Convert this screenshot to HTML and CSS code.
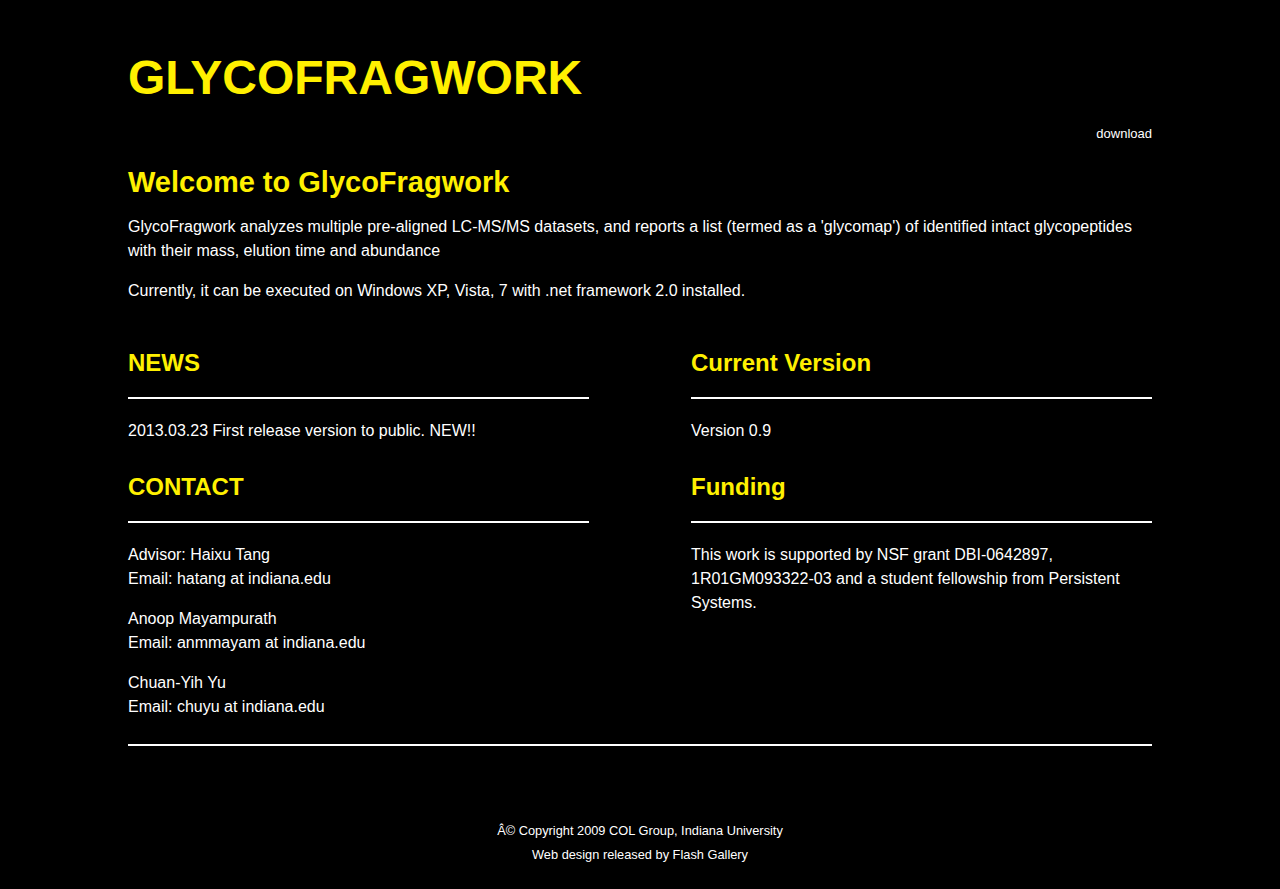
FILE: index.html
```html
<!DOCTYPE html>
<html>
<head>
<meta charset="utf-8">
<title>GlycoFragwork</title>
<link rel="stylesheet" href="styles.css">
</head>
<body>
<div class="page">
  <header class="header">
    <h1 class="logo">GLYCOFRAGWORK</h1>
    <nav class="nav"><a href="#" class="nav-link">download</a></nav>
  </header>
  <section class="intro">
    <h2 class="intro-title">Welcome to GlycoFragwork</h2>
    <p class="text">GlycoFragwork analyzes multiple pre-aligned LC-MS/MS datasets, and reports a list (termed as a 'glycomap') of identified intact glycopeptides with their mass, elution time and abundance</p>
    <p class="text">Currently, it can be executed on Windows XP, Vista, 7 with .net framework 2.0 installed.</p>
  </section>
  <div class="columns">
    <div class="col">
      <h3 class="sec-title">NEWS</h3>
      <p class="text">2013.03.23 First release version to public. NEW!!</p>
      <h3 class="sec-title">CONTACT</h3>
      <p class="text">Advisor: Haixu Tang<br>Email: hatang at indiana.edu</p>
      <p class="text">Anoop Mayampurath<br>Email: anmmayam at indiana.edu</p>
      <p class="text">Chuan-Yih Yu<br>Email: chuyu at indiana.edu</p>
    </div>
    <div class="col">
      <h3 class="sec-title">Current Version</h3>
      <p class="text">Version 0.9</p>
      <h3 class="sec-title">Funding</h3>
      <p class="text">This work is supported by NSF grant DBI-0642897, 1R01GM093322-03 and a student fellowship from Persistent Systems.</p>
    </div>
  </div>
  <footer class="footer">
    <p class="foot-line">Â© Copyright 2009 COL Group, Indiana University</p>
    <p class="foot-line">Web design released by Flash Gallery</p>
  </footer>
</div>
</body>
</html>
```
FILE: styles.css
```css
html, body {
  margin: 0;
  padding: 0;
  background: #000;
}
body {
  font-family: "Liberation Sans", Arial, Helvetica, sans-serif;
  color: #fff;
}
.page {
  width: 1024px;
  margin: 0 auto;
  padding-top: 46px;
}
.logo {
  margin: 0;
  font-size: 48px;
  line-height: 64px;
  font-weight: bold;
  color: #fff000;
}
.nav {
  display: flex;
  justify-content: flex-end;
  margin-top: 14px;
}
.nav-link {
  color: #fff;
  text-decoration: none;
  font-size: 13px;
  line-height: 20px;
}
.intro {
  padding-top: 20px;
}
.intro-title {
  margin: 0 0 15px;
  font-size: 29px;
  line-height: 36px;
  font-weight: bold;
  color: #fff000;
}
.text {
  margin: 0 0 16px;
  font-size: 16px;
  line-height: 24px;
}
.columns {
  display: grid;
  grid-template-columns: 461px 461px;
  column-gap: 102px;
  margin-top: 46px;
  border-bottom: 2px solid #fff;
  padding-bottom: 25px;
}
.col .text:last-child {
  margin-bottom: 0;
}
.sec-title {
  margin: 0 0 20px;
  padding-bottom: 20px;
  border-bottom: 2px solid #fff;
  font-size: 24px;
  line-height: 28px;
  font-weight: bold;
  color: #fff000;
}
.col .text + .sec-title {
  margin-top: 30px;
}
.footer {
  padding-top: 73px;
  padding-bottom: 20px;
  text-align: center;
}
.foot-line {
  margin: 0;
  font-size: 12.8px;
  line-height: 24px;
}
```
